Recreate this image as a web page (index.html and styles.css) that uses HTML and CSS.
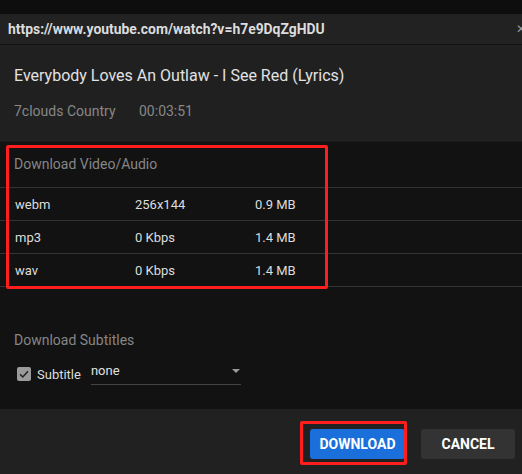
FILE: index.html
```html
<!DOCTYPE html>
<html>
<head>
<meta charset="utf-8">
<link rel="stylesheet" href="styles.css">
</head>
<body>
<div class="top-strip"></div>
<div class="dialog">
  <div class="header">
    <span class="url">https://www.youtube.com/watch?v=h7e9DqZgHDU</span>
    <span class="close">✕</span>
  </div>
  <div class="info">
    <div class="title">Everybody Loves An Outlaw - I See Red (Lyrics)</div>
    <div class="meta"><span class="channel">7clouds Country</span><span class="duration">00:03:51</span></div>
  </div>
  <div class="content">
    <div class="table">
      <div class="table-head">Download Video/Audio</div>
      <div class="row"><span class="c1">webm</span><span class="c2">256x144</span><span class="c3">0.9 MB</span></div>
      <div class="row"><span class="c1">mp3</span><span class="c2">0 Kbps</span><span class="c3">1.4 MB</span></div>
      <div class="row"><span class="c1">wav</span><span class="c2">0 Kbps</span><span class="c3">1.4 MB</span></div>
      <div class="mark mark-table"></div>
    </div>
    <div class="subs">
      <div class="subs-head">Download Subtitles</div>
      <div class="subs-row">
        <span class="checkbox"><svg width="14" height="14" viewBox="0 0 14 14"><path d="M3 7.2 L5.8 10 L11 4.2" fill="none" stroke="#222" stroke-width="1.5"/></svg></span>
        <span class="sub-label">Subtitle</span>
        <div class="select"><span>none</span><span class="arrow"></span></div>
      </div>
    </div>
  </div>
  <div class="footer">
    <div class="btn-wrap">
      <button class="btn primary">DOWNLOAD</button>
      <div class="mark mark-btn"></div>
    </div>
    <button class="btn secondary">CANCEL</button>
  </div>
</div>
</body>
</html>
```
FILE: styles.css
```css
html, body {
  margin: 0;
  padding: 0;
  background: #0e0e0e;
  overflow: hidden;
  font-family: Roboto, "Liberation Sans", sans-serif;
}
.top-strip {
  height: 14px;
  background: #0e0e0e;
}
.dialog {
  width: 530px;
  background: #202020;
}
.header {
  height: 30px;
  background: #222222;
  border-bottom: 1px solid #141414;
  display: flex;
  align-items: center;
  justify-content: space-between;
  padding: 0 8px 0 8px;
}
.url {
  color: #dcdcdc;
  font-weight: bold;
  font-size: 13.9px;
}
.close {
  color: #9a9a9a;
  font-size: 12px;
  margin-right: -4px;
}
.info {
  height: 96px;
  background: #202020;
  padding: 0 14px;
  box-sizing: border-box;
  padding-top: 21px;
}
.title {
  color: #e2e2e2;
  font-size: 16px;
  line-height: 20px;
}
.meta {
  margin-top: 16px;
  font-size: 14px;
  line-height: 18px;
  color: #878787;
  display: flex;
}
.channel {
  width: 125px;
}
.content {
  background: #121212;
  height: 268px;
  border-top: 1px solid #1c1c1c;
  box-sizing: border-box;
}
.table {
  position: relative;
}
.table-head {
  height: 46px;
  box-sizing: border-box;
  padding: 13px 0 0 14px;
  color: #868686;
  font-size: 14px;
  line-height: 18px;
  border-bottom: 1px solid #333;
}
.row {
  height: 33px;
  box-sizing: border-box;
  border-bottom: 1px solid #333;
  display: flex;
  align-items: center;
  color: #dddddd;
  font-size: 13px;
  padding-left: 15px;
}
.c1, .c2 {
  width: 120px;
}
.mark {
  position: absolute;
  border: 3px solid #ff1e1e;
  border-radius: 2px;
  box-sizing: border-box;
}
.mark-table {
  left: 6px;
  top: 3px;
  width: 322px;
  height: 144px;
}
.subs {
  padding: 44px 0 0 14px;
}
.subs-head {
  color: #868686;
  font-size: 14px;
  line-height: 18px;
}
.subs-row {
  margin-top: 12px;
  display: flex;
  align-items: center;
  height: 24px;
}
.checkbox {
  width: 14px;
  height: 14px;
  background: #9b9b9b;
  border-radius: 2px;
  margin-left: 3px;
  display: flex;
  margin-top: 2px;
}
.sub-label {
  color: #dddddd;
  font-size: 13px;
  margin-left: 6px;
  margin-top: 2px;
}
.select {
  margin-left: 10px;
  width: 150px;
  height: 24px;
  box-sizing: border-box;
  border-bottom: 1px solid #444;
  display: flex;
  align-items: center;
  justify-content: space-between;
  color: #e0e0e0;
  font-size: 13px;
  padding-bottom: 4px;
}
.arrow {
  width: 0;
  height: 0;
  border-left: 4px solid transparent;
  border-right: 4px solid transparent;
  border-top: 4px solid #9a9a9a;
  margin-right: 1px;
}
.footer {
  height: 65px;
  background: #212121;
  display: flex;
  justify-content: flex-end;
  align-items: flex-start;
  padding: 20px 15px 0 0;
  box-sizing: border-box;
  gap: 16px;
}
.btn-wrap {
  position: relative;
}
.btn {
  height: 30px;
  border: none;
  border-radius: 3px;
  font-family: Roboto, "Liberation Sans", sans-serif;
  font-weight: bold;
  font-size: 14px;
  color: #ffffff;
  padding: 0;
  display: block;
}
.primary {
  width: 95px;
  background: #1a6fdb;
}
.secondary {
  width: 94px;
  background: #333333;
}
.mark-btn {
  left: -10px;
  top: -8px;
  width: 107px;
  height: 44px;
}
```
